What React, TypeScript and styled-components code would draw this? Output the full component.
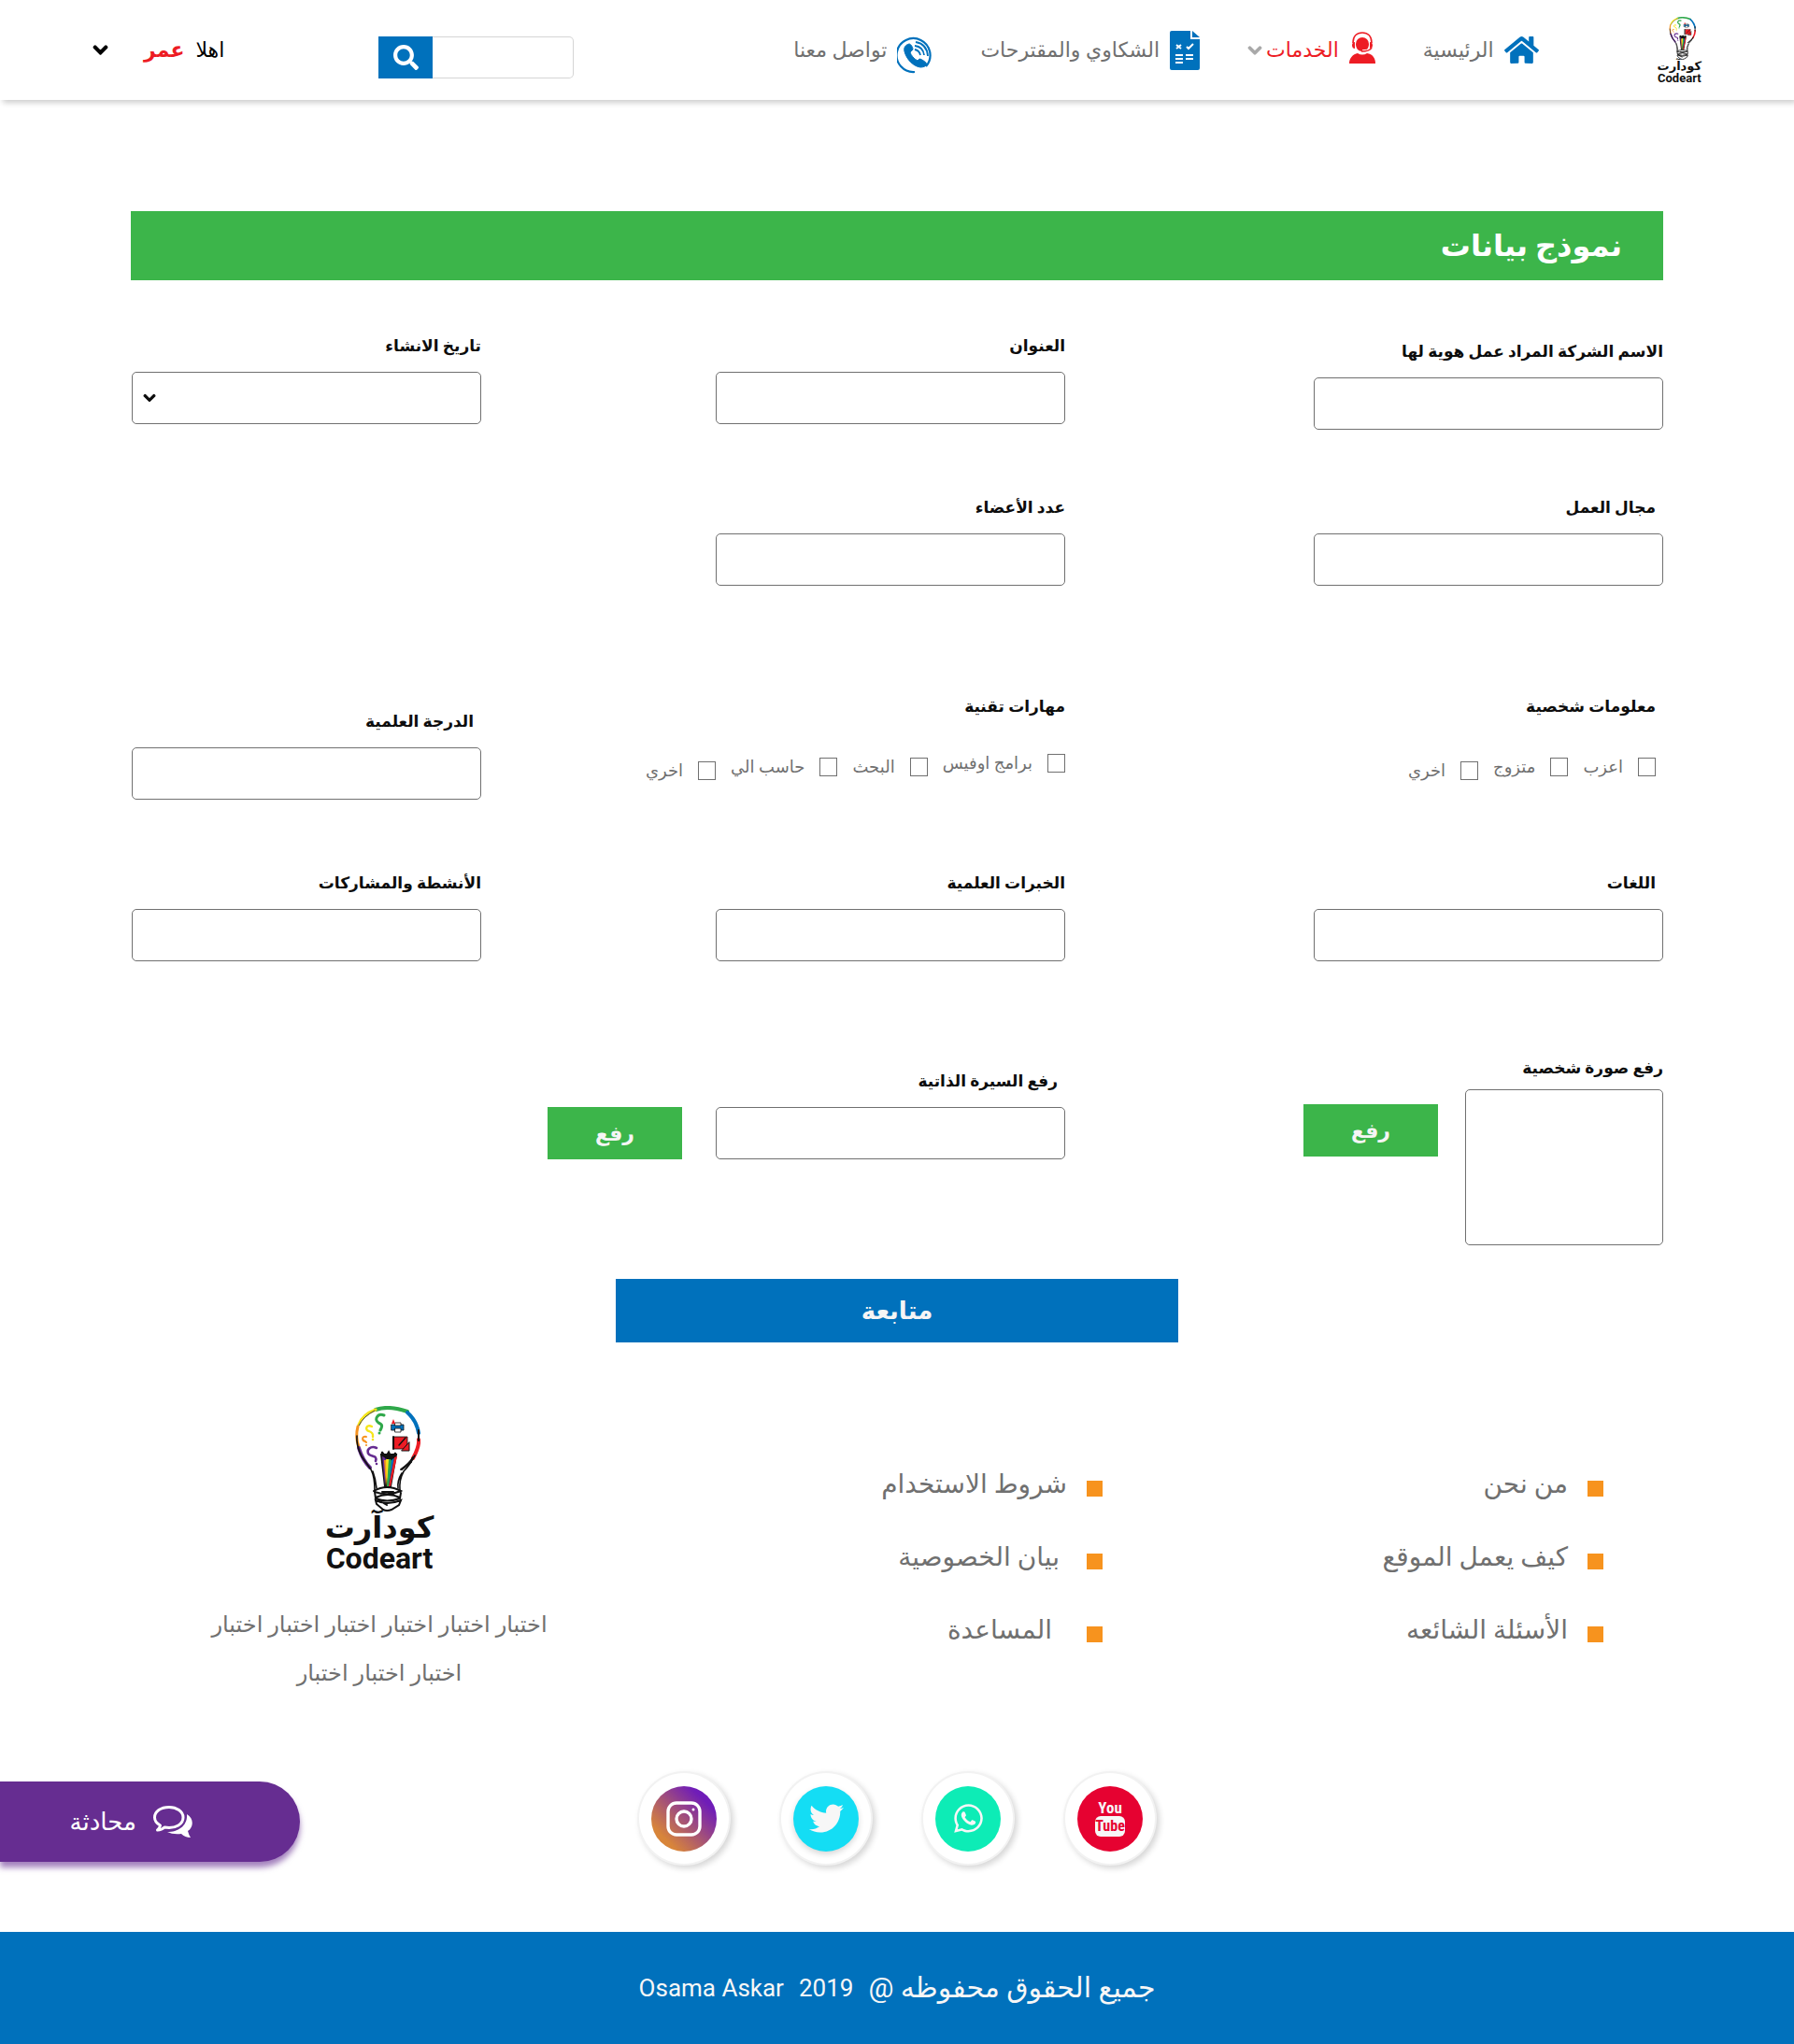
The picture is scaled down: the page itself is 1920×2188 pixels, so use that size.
import React from 'react';
import styled, { createGlobalStyle } from 'styled-components';
import { FaChevronDown, FaHome, FaSearch, FaTwitter, FaWhatsapp } from 'react-icons/fa';

const color = {
  blue: '#0071bc',
  green: '#3cb54a',
  red: '#ed1c24',
  orange: '#f7931e',
  purple: '#662d91',
  grey: '#707070',
  ink: '#0d0d0d',
};

const fontStack = "Roboto, 'DejaVu Sans', sans-serif";

const GlobalStyle = createGlobalStyle`
  *, *::before, *::after { box-sizing: border-box; }
  body { margin: 0; background: #fff; color: ${color.ink}; font-family: ${fontStack}; }
  button, input, select { font-family: inherit; }
  a { color: inherit; text-decoration: none; }
  ul { margin: 0; padding: 0; list-style: none; }
  svg { display: block; flex: none; }
`;

const Chevron = styled(FaChevronDown)`
  stroke: currentColor;
  stroke-width: 40px;
  overflow: visible;
`;

/* ---------- header ---------- */

const Header = styled.header`
  display: flex;
  align-items: center;
  height: 107px;
  padding: 0 99px;
  background: #fff;
  box-shadow: 3px 3px 6px rgba(0, 0, 0, 0.2);
`;

const LogoBox = styled.a`
  display: flex;
  flex-direction: column;
  align-items: center;
  color: #111;
  font-weight: 700;
`;

const LogoArabic = styled.span<{ $large?: boolean }>`
  font-size: ${(p) => (p.$large ? 32 : 13)}px;
  line-height: ${(p) => (p.$large ? 34 : 14)}px;
`;

const LogoLatin = styled.span<{ $large?: boolean }>`
  font-size: ${(p) => (p.$large ? 32 : 13)}px;
  line-height: ${(p) => (p.$large ? 32 : 12)}px;
`;

const Nav = styled.nav`
  display: flex;
  align-items: center;
  gap: 51px;
  margin-inline-start: 127px;
`;

const NavLink = styled.a<{ $active?: boolean }>`
  display: flex;
  align-items: center;
  gap: 11px;
  color: ${(p) => (p.$active ? color.red : color.grey)};
  font-size: 22px;
  line-height: 32px;
  white-space: nowrap;
`;

const NavText = styled.span`
  display: flex;
  align-items: center;
  gap: 4px;
  svg { color: #a9a9a9; }
`;

const Search = styled.form`
  display: flex;
  flex-direction: row-reverse;
  height: 45px;
  margin-inline-start: auto;
  margin-top: 16px;
`;

const SearchButton = styled.button`
  display: grid;
  place-items: center;
  width: 58px;
  padding: 0;
  border: 0;
  background: ${color.blue};
  color: #fff;
`;

const SearchInput = styled.input`
  width: 151px;
  border: 1px solid #d5d5d5;
  border-left: 0;
  border-radius: 0 5px 5px 0;
  outline: 0;
`;

const UserMenu = styled.button`
  display: flex;
  align-items: center;
  gap: 38px;
  margin-inline-start: 165px;
  padding: 0;
  border: 0;
  background: none;
  color: #000;
  font-size: 22px;
  line-height: 32px;
`;

const Greeting = styled.span`
  display: flex;
  gap: 12px;
`;

const UserName = styled.strong`
  color: ${color.red};
`;

/* ---------- form ---------- */

const Form = styled.form`
  display: flex;
  flex-direction: column;
  padding: 119px 140px 0;
`;

const Title = styled.h1`
  margin: 0 0 60px;
  padding: 0 44px;
  background: ${color.green};
  color: #fff;
  font-size: 32px;
  line-height: 74px;
`;

const Row = styled.div<{ $space?: number }>`
  display: grid;
  grid-template-columns: 640fr 625fr 375fr;
  align-items: start;
  margin-top: ${(p) => p.$space ?? 0}px;
`;

const Field = styled.div<{ $lower?: number; $gap?: number }>`
  display: flex;
  flex-direction: column;
  gap: ${(p) => p.$gap ?? 18}px;
  padding-top: ${(p) => p.$lower ?? 0}px;
`;

const labelText = `
  font-size: 17px;
  font-weight: 700;
  line-height: 20px;
`;

const Label = styled.label<{ $inset?: boolean }>`
  ${labelText}
  padding-inline-start: ${(p) => (p.$inset ? 8 : 0)}px;
`;

const boxLook = `
  border: 1px solid ${color.grey};
  border-radius: 5px;
  background: #fff;
`;

const TextInput = styled.input`
  ${boxLook}
  width: 100%;
  max-width: 374px;
  height: 56px;
  padding: 0 12px;
  font-size: 16px;
`;

const SelectWrap = styled.div`
  display: grid;
  align-items: center;
  max-width: 374px;
  > * { grid-area: 1 / 1; }
  svg { justify-self: end; margin-inline-end: 12px; pointer-events: none; }
`;

const Select = styled.select`
  ${boxLook}
  appearance: none;
  width: 100%;
  height: 56px;
  padding: 0 12px;
  font-size: 16px;
`;

const Group = styled.fieldset<{ $inset?: boolean }>`
  margin: 0;
  padding: 0;
  padding-inline-start: ${(p) => (p.$inset ? 8 : 0)}px;
  border: 0;
`;

const Legend = styled.legend`
  ${labelText}
  padding: 0;
`;

const Options = styled.div`
  display: flex;
  align-items: flex-start;
  gap: 16px;
  padding-top: 39px;
`;

const Option = styled.label<{ $lower: number }>`
  display: flex;
  align-items: center;
  gap: 16px;
  padding-top: ${(p) => p.$lower}px;
  color: ${color.grey};
  font-size: 18px;
  line-height: 24px;
  white-space: nowrap;
`;

const Check = styled.input`
  appearance: none;
  width: 19px;
  height: 20px;
  margin: 0;
  border: 1px solid ${color.grey};
  background: #fff;
  &:checked { background: ${color.green}; }
`;

const UploadRow = styled.div<{ $gap: number }>`
  display: flex;
  align-items: flex-start;
  gap: ${(p) => p.$gap}px;
`;

const PhotoPreview = styled.output`
  ${boxLook}
  width: 212px;
  height: 167px;
`;

const UploadButton = styled.button<{ $lower?: number }>`
  width: 144px;
  height: 56px;
  margin-top: ${(p) => p.$lower ?? 0}px;
  padding: 0;
  border: 0;
  background: ${color.green};
  color: #f5f5f5;
  font-size: 22px;
  font-weight: 700;
`;

const Submit = styled.button`
  align-self: center;
  width: 100%;
  max-width: 602px;
  height: 68px;
  margin-top: 36px;
  border: 0;
  background: ${color.blue};
  color: #f5f5f5;
  font-size: 26px;
  font-weight: 700;
`;

/* ---------- footer ---------- */

const FooterTop = styled.section`
  display: grid;
  grid-template-columns: 536fr 540fr 468fr;
  padding: 68px 204px 0 172px;
`;

const Links = styled.ul`
  display: flex;
  flex-direction: column;
  padding-top: 49px;
`;

const LinkItem = styled.li<{ $indent?: number }>`
  display: flex;
  align-items: center;
  gap: ${(p) => 21 + (p.$indent ?? 0)}px;
  height: 78px;
  color: ${color.grey};
  font-size: 28px;
  line-height: 40px;
  &::before {
    content: '';
    width: 17px;
    height: 17px;
    background: ${color.orange};
  }
  a { padding-bottom: 8px; }
`;

const Brand = styled.div`
  display: flex;
  flex-direction: column;
  align-items: center;
  gap: 29px;
`;

const About = styled.p`
  max-width: 400px;
  margin: 0;
  color: ${color.grey};
  font-size: 24px;
  line-height: 52px;
  text-align: center;
`;

const ContactRow = styled.section`
  display: grid;
  grid-template-columns: 1fr auto 1fr;
  align-items: end;
  padding: 79px 0 71px;
`;

const Social = styled.ul`
  grid-column: 2;
  display: flex;
  gap: 52px;
`;

const SocialLink = styled.a<{ $fill: string; $glow?: boolean }>`
  display: grid;
  place-items: center;
  width: 100px;
  height: 101px;
  border: 2px solid #f2f2f2;
  border-radius: 50%;
  background: #fff;
  box-shadow: 3px 3px 6px rgba(0, 0, 0, 0.16);
  > span {
    display: grid;
    place-content: center;
    justify-items: center;
    width: 70px;
    height: 70px;
    border-radius: 50%;
    background: ${(p) => p.$fill};
    color: #f7f7f7;
    box-shadow: ${(p) => (p.$glow ? '0 3px 6px rgba(0, 0, 0, 0.16)' : 'none')};
  }
`;

const YouText = styled.b`
  font-family: 'Roboto Condensed', 'Liberation Sans Narrow', sans-serif;
  font-size: 17px;
  line-height: 17px;
`;

const TubeText = styled(YouText)`
  width: 32px;
  border-radius: 6px;
  background: #f7f7f7;
  color: #e60231;
  font-size: 16px;
  line-height: 22px;
  text-align: center;
`;

const ChatButton = styled.button`
  justify-self: end;
  display: flex;
  align-items: center;
  gap: 18px;
  width: 321px;
  height: 86px;
  margin-bottom: 4px;
  padding: 0 115px 0 0;
  border: 0;
  border-radius: 0 43px 43px 0;
  background: ${color.purple};
  box-shadow: 0 6px 6px rgba(102, 45, 145, 0.6);
  color: #fff;
  font-size: 26px;
`;

const Copyright = styled.footer`
  display: flex;
  align-items: center;
  justify-content: center;
  gap: 16px;
  height: 120px;
  background: ${color.blue};
  color: #f7f7f7;
  font-size: 30px;
  line-height: 40px;
`;

const LatinText = styled.span`
  font-size: 26px;
`;

/* ---------- drawings ---------- */

const Bulb = ({ width, height }: { width: number; height: number }) => (
  <svg width={width} height={height} viewBox="-18 0 88 113" fill="none" strokeLinecap="round">
    <path d="M22 4Q36-1 56 6" stroke="#2fa84a" strokeWidth="4" />
    <path d="M22 4Q8 9 4 20" stroke="#f5e51b" strokeWidth="3" />
    <path d="M21 5Q9 11 4 21" stroke="#444" strokeWidth="1" />
    <path d="M3 22Q0 33 4 44" stroke="#f7931e" strokeWidth="3" />
    <path d="M4 45Q8 58 16 66" stroke="#662d91" strokeWidth="4" />
    <path d="M56 7Q66 16 68 29" stroke="#0071bc" strokeWidth="4" />
    <path d="M68 36Q69 43 62 56" stroke="#ed1c24" strokeWidth="4" />
    <path d="M68 26V37M62 55Q58 62 49 68M60 60L50 68" stroke="#111" strokeWidth="2" />
    <path d="M2 32Q1 42 7 54L17 68Q21 76 21 90M64 53Q58 64 52 70Q47 79 48 90M19 70Q22 78 23 88M50 72Q45 80 46 88" stroke="#111" strokeWidth="1.6" />
    <path d="M28 52L32 86H38L44 52Z" fill="#111" stroke="#111" strokeWidth="2" />
    <path d="M29 54L32 86L34 56Z" fill="#662d91" />
    <path d="M31 58L33 86L36 58Z" fill="#f7931e" />
    <path d="M33 57L34 86L37 57Z" fill="#f5e51b" />
    <path d="M36 57L34 86H36L40 57Z" fill="#2fa84a" />
    <path d="M39 57L36 86L42 56Z" fill="#0071bc" />
    <path d="M42 55L36 86H38L45 54Z" fill="#ed1c24" />
    <path d="M29 50L33 55L36 50L39 56L43 51" stroke="#111" strokeWidth="2.6" />
    <path d="M20 91Q34 83 49 91Q36 97 21 92L22 99Q34 104 48 99L49 93M22 98Q35 92 48 98" stroke="#111" strokeWidth="2" />
    <path d="M22 101Q34 107 49 101L47 106L39 111Q34 113 30 111L23 105ZM25 101L34 106M29 92H41" stroke="#111" strokeWidth="2" />
    <path d="M31 10C24 7 20 15 25 18C30 20 29 22 27 26" stroke="#2fa84a" strokeWidth="3" />
    <path d="M18 22C12 19 10 26 15 27C20 29 19 31 19 33" stroke="#f5e51b" strokeWidth="2.4" />
    <path d="M12 33C7 32 7 37 11 38L12 39" stroke="#f7931e" strokeWidth="2" />
    <path d="M23 45C17 42 11 47 15 52C19 55 24 53 22 59" stroke="#662d91" strokeWidth="2.6" />
    <g strokeWidth="0">
      <circle cx="26" cy="29" r="1.5" fill="#2fa84a" />
      <circle cx="19" cy="36" r="1.3" fill="#f5e51b" />
      <circle cx="12" cy="42" r="1.1" fill="#f7931e" />
      <circle cx="23" cy="62" r="1.3" fill="#662d91" />
    </g>
    <path d="M39 20H52V26H39Z" fill="#0071bc" stroke="#111" strokeWidth=".8" />
    <path d="M43 18H49V21H43ZM43 24H49V28H43Z" fill="#fff" stroke="#111" strokeWidth=".8" />
    <path d="M39 19L41 14L43 19Z" fill="#ed1c24" />
    <path d="M42 33H56V46H42Z" fill="#ed1c24" stroke="#111" strokeWidth=".8" />
    <path d="M41 33V46" stroke="#111" strokeWidth="2" />
    <path d="M58 39V48H50Z" fill="#ed1c24" stroke="#111" strokeWidth="1" />
    <path d="M47 42L54 34" stroke="#111" strokeWidth="1.4" />
  </svg>
);

const AgentIcon = () => (
  <svg width="28" height="40" viewBox="0 0 28 40" fill={color.red}>
    <path d="M0 34C0 28 4 24 9 23Q14 26 19 23C25 24 28 28 28 34Z" />
    <path d="M14 6a7 7 0 0 1 7 7c0 5-3 8-7 8s-7-3-7-8a7 7 0 0 1 7-7Z" />
    <path d="M4 12C4 5 8 1 14 1S24 5 24 12" fill="none" stroke={color.red} strokeWidth="1.6" />
    <path d="M6 11v7c-4 0-4-7 0-7ZM22 11v7c4 0 4-7 0-7Z" />
    <path d="M23 18Q21 21 14 21" fill="none" stroke="#fff" strokeWidth="3.4" />
    <path d="M24 17Q22 21 13 21" fill="none" stroke={color.red} strokeWidth="1.6" />
  </svg>
);

const SurveyIcon = () => (
  <svg width="32" height="42" viewBox="0 0 32 42">
    <path d="M2 0H22V9H32V40Q32 42 30 42H2Q0 42 0 40V2Q0 0 2 0Z" fill={color.blue} />
    <path d="M24 0L32 7H24Z" fill={color.blue} />
    <path d="M7 15L12 19M12 15L7 19M18 17L20 19L25 14" stroke="#fff" strokeWidth="2" fill="none" />
    <path d="M6 26H14M6 30H14M6 34H14M17 26H25M17 30H25" stroke="#fff" strokeWidth="2" />
  </svg>
);

const PhoneIcon = () => (
  <svg width="38" height="50" viewBox="0 -10 38 50" fill="none" stroke={color.blue}>
    <path d="M19 38A18 18 0 1 1 31 32" strokeWidth="2.2" />
    <path
      d="M13 8C9 9 7 12 8 16C10 24 17 32 25 33C28 33 31 32 32 30C32 28 26 24 24 24L22 26C18 24 15 20 14 17L17 14C17 12 15 8 13 8Z"
      fill={color.blue}
      strokeWidth="1"
    />
    <path d="M19 14Q24 15 25 20M19 10Q28 11 29 20M20 6Q32 8 33 21" strokeWidth="1.8" />
  </svg>
);

const InstagramIcon = () => (
  <svg width="38" height="38" viewBox="0 0 38 38" fill="none" stroke="#fff" strokeWidth="3.4">
    <rect x="2" y="2" width="34" height="34" rx="9" />
    <circle cx="19" cy="19" r="8" />
    <circle cx="29" cy="9" r="1.5" fill="#fff" strokeWidth="0" />
  </svg>
);

const ChatIcon = () => (
  <svg width="42" height="34" viewBox="0 0 42 34">
    <path
      d="M17 1.500C8 1.500 1.500 6 1.500 12.500C1.500 16 4 19 7.500 21Q7 24 4.500 26Q9 26 12 23C25 25 32 19 32 12.500C32 6 25 1.500 17 1.500Z"
      fill="none"
      stroke="#fff"
      strokeWidth="3"
      strokeLinejoin="round"
    />
    <path d="M36 9C44 14 43 23 37 27Q38 31 40 34Q34 34 30 30Q21 31 15 28C27 28 37 21 36 9Z" fill="#fff" />
  </svg>
);

const Logo = ({ large }: { large?: boolean }) => (
  <LogoBox href="#home">
    <Bulb width={large ? 88 : 36} height={large ? 113 : 46} />
    <LogoArabic $large={large}>كودآرت</LogoArabic>
    <LogoLatin $large={large}>Codeart</LogoLatin>
  </LogoBox>
);

/* ---------- page ---------- */

type TextFieldProps = { id: string; label: string; inset?: boolean; lower?: number };

const TextField = ({ id, label, inset, lower }: TextFieldProps) => (
  <Field $lower={lower}>
    <Label htmlFor={id} $inset={inset}>{label}</Label>
    <TextInput id={id} />
  </Field>
);

type OptionGroupProps = { legend: string; inset?: boolean; options: [string, number][] };

const OptionGroup = ({ legend, inset, options }: OptionGroupProps) => (
  <Group $inset={inset}>
    <Legend>{legend}</Legend>
    <Options>
      {options.map(([text, lower]) => (
        <Option key={text} $lower={lower}>
          <Check type="checkbox" />
          {text}
        </Option>
      ))}
    </Options>
  </Group>
);

export default function App() {
  return (
    <div dir="rtl" lang="ar">
      <GlobalStyle />
      <Header>
        <Logo />
        <Nav>
          <NavLink href="#home">
            <FaHome size={37} color={color.blue} />
            <NavText>الرئيسية</NavText>
          </NavLink>
          <NavLink href="#services" $active>
            <AgentIcon />
            <NavText>
              الخدمات
              <Chevron size={16} />
            </NavText>
          </NavLink>
          <NavLink href="#complaints">
            <SurveyIcon />
            <NavText>الشكاوي والمقترحات</NavText>
          </NavLink>
          <NavLink href="#contact">
            <PhoneIcon />
            <NavText>تواصل معنا</NavText>
          </NavLink>
        </Nav>
        <Search>
          <SearchButton type="button" aria-label="بحث">
            <FaSearch size={27} />
          </SearchButton>
          <SearchInput type="search" aria-label="بحث" />
        </Search>
        <UserMenu type="button">
          <Greeting>
            <span>اهلا</span>
            <UserName>عمر</UserName>
          </Greeting>
          <Chevron size={17} />
        </UserMenu>
      </Header>

      <Form>
        <Title>نموذج بيانات</Title>
        <Row>
          <TextField id="company" label="الاسم الشركة المراد عمل هوية لها" lower={6} />
          <TextField id="address" label="العنوان" />
          <Field>
            <Label htmlFor="founded">تاريخ الانشاء</Label>
            <SelectWrap>
              <Select id="founded" />
              <Chevron size={14} />
            </SelectWrap>
          </Field>
        </Row>
        <Row $space={73}>
          <TextField id="domain" label="مجال العمل" inset />
          <TextField id="members" label="عدد الأعضاء" />
        </Row>
        <Row $space={119}>
          <OptionGroup
            legend="معلومات شخصية"
            inset
            options={[['اعزب', 4], ['متزوج', 4], ['اخري', 8]]}
          />
          <OptionGroup
            legend="مهارات تقنية"
            options={[['برامج اوفيس', 0], ['البحث', 4], ['حاسب الي', 4], ['اخري', 8]]}
          />
          <TextField id="degree" label="الدرجة العلمية" inset lower={16} />
        </Row>
        <Row $space={79}>
          <TextField id="languages" label="اللغات" inset />
          <TextField id="experience" label="الخبرات العلمية" />
          <TextField id="activities" label="الأنشطة والمشاركات" />
        </Row>
        <Row $space={104}>
          <Field $gap={13}>
            <Label htmlFor="photo">رفع صورة شخصية</Label>
            <UploadRow $gap={29}>
              <PhotoPreview id="photo" />
              <UploadButton type="button" $lower={16}>رفع</UploadButton>
            </UploadRow>
          </Field>
          <Field $lower={14}>
            <Label htmlFor="cv" $inset>رفع السيرة الذاتية</Label>
            <UploadRow $gap={36}>
              <TextInput id="cv" />
              <UploadButton type="button">رفع</UploadButton>
            </UploadRow>
          </Field>
        </Row>
        <Submit type="button">متابعة</Submit>
      </Form>

      <FooterTop>
        <Links>
          <LinkItem><a href="#about">من نحن</a></LinkItem>
          <LinkItem><a href="#how">كيف يعمل الموقع</a></LinkItem>
          <LinkItem><a href="#faq">الأسئلة الشائعه</a></LinkItem>
        </Links>
        <Links>
          <LinkItem><a href="#terms">شروط الاستخدام</a></LinkItem>
          <LinkItem $indent={8}><a href="#privacy">بيان الخصوصية</a></LinkItem>
          <LinkItem $indent={16}><a href="#help">المساعدة</a></LinkItem>
        </Links>
        <Brand>
          <Logo large />
          <About>اختبار اختبار اختبار اختبار اختبار اختبار اختبار اختبار اختبار</About>
        </Brand>
      </FooterTop>

      <ContactRow>
        <Social>
          <li>
            <SocialLink href="#youtube" aria-label="YouTube" $fill="#e60231">
              <span>
                <YouText>You</YouText>
                <TubeText>Tube</TubeText>
              </span>
            </SocialLink>
          </li>
          <li>
            <SocialLink href="#whatsapp" aria-label="WhatsApp" $fill="#0decb6">
              <span><FaWhatsapp size={35} /></span>
            </SocialLink>
          </li>
          <li>
            <SocialLink href="#twitter" aria-label="Twitter" $fill="#14ddf4" $glow>
              <span><FaTwitter size={37} /></span>
            </SocialLink>
          </li>
          <li>
            <SocialLink
              href="#instagram"
              aria-label="Instagram"
              $fill="linear-gradient(45deg, #d8853a 20%, #6f1cb8 80%)"
            >
              <span><InstagramIcon /></span>
            </SocialLink>
          </li>
        </Social>
        <ChatButton type="button">
          <ChatIcon />
          محادثة
        </ChatButton>
      </ContactRow>

      <Copyright>
        <span>جميع الحقوق محفوظه @</span>
        <LatinText>2019</LatinText>
        <LatinText>Osama Askar</LatinText>
      </Copyright>
    </div>
  );
}
